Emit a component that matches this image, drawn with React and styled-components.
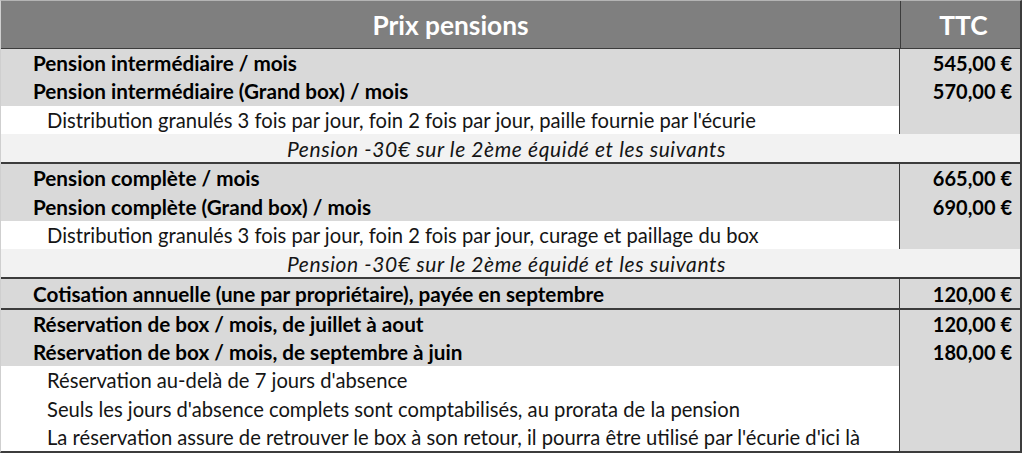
import React from 'react'
import styled, { createGlobalStyle } from 'styled-components'

const Global = createGlobalStyle`
    body {
        margin: 0;
        background: #ffffff;
        font-family: Lato, "Open Sans", sans-serif;
        color: #111111;
    }
`

const Table = styled.div`
    width: 1022px;
    border-top: 1px solid #b4b4b4;
    border-left: 1px solid #cfcfcf;
    border-right: 2px solid #3c3c3c;
    border-bottom: 2px solid #3c3c3c;
    box-sizing: border-box;
`

const Header = styled.div`
    display: flex;
    height: 47px;
    background: #7f7f7f;
    border-bottom: 1px solid #3c3c3c;
`

const HeadCell = styled.div`
    display: flex;
    align-items: center;
    justify-content: center;
    color: #ffffff;
    font-weight: 700;
    font-size: 26.3px;
    width: ${p => (p.wide ? '899px' : 'auto')};
    flex: ${p => (p.wide ? 'none' : '1')};
    border-right: ${p => (p.wide ? '1px solid #3c3c3c' : 'none')};
    padding-left: ${p => (p.wide ? '0' : '6px')};
`

const Group = styled.div`
    border-top: ${p => (p.first ? 'none' : '2px solid #3c3c3c')};
`

const Row = styled.div`
    display: flex;
    height: 28.3px;
`

const Label = styled.div`
    width: 899px;
    flex: none;
    display: flex;
    align-items: center;
    box-sizing: border-box;
    border-right: 1px solid #3c3c3c;
    background: ${p => (p.detail ? '#ffffff' : '#d9d9d9')};
    padding-left: ${p => (p.detail ? '46px' : '32px')};
    font-size: ${p => (p.detail ? '20.2px' : '20.7px')};
    font-weight: ${p => (p.detail ? 400 : 700)};
    color: ${p => (p.detail ? '#151515' : '#000000')};
    white-space: nowrap;
`

const Price = styled.div`
    flex: 1;
    display: flex;
    align-items: center;
    justify-content: flex-end;
    padding-right: 8px;
    background: #d9d9d9;
    font-size: 20px;
    font-weight: 700;
    color: #000000;
`

const Note = styled.div`
    height: 28.3px;
    display: flex;
    align-items: center;
    justify-content: center;
    background: #f2f2f2;
    font-style: italic;
    font-size: 21px;
    letter-spacing: 0.6px;
    color: #151515;
    padding-right: 8px;
`

const groups = [
    {
        rows: [
            ['Pension intermédiaire / mois', '545,00 €'],
            ['Pension intermédiaire (Grand box) / mois', '570,00 €'],
        ],
        details: ["Distribution granulés 3 fois par jour, foin 2 fois par jour, paille fournie par l'écurie"],
        note: 'Pension -30€ sur le 2ème équidé et les suivants',
    },
    {
        rows: [
            ['Pension complète / mois', '665,00 €'],
            ['Pension complète (Grand box) / mois', '690,00 €'],
        ],
        details: ['Distribution granulés 3 fois par jour, foin 2 fois par jour, curage et paillage du box'],
        note: 'Pension -30€ sur le 2ème équidé et les suivants',
    },
    {
        rows: [['Cotisation annuelle (une par propriétaire), payée en septembre', '120,00 €']],
        details: [],
    },
    {
        rows: [
            ['Réservation de box / mois, de juillet à aout', '120,00 €'],
            ['Réservation de box / mois, de septembre à juin', '180,00 €'],
        ],
        details: [
            "Réservation au-delà de 7 jours d'absence",
            "Seuls les jours d'absence complets sont comptabilisés, au prorata de la pension",
            "La réservation assure de retrouver le box à son retour, il pourra être utilisé par l'écurie d'ici là",
        ],
    },
]

export default function App() {
    return (
        <>
            <Global />
            <Table>
                <Header>
                    <HeadCell wide>Prix pensions</HeadCell>
                    <HeadCell>TTC</HeadCell>
                </Header>
                {groups.map((g, i) => (
                    <Group key={i} first={i === 0}>
                        {g.rows.map(([label, price]) => (
                            <Row key={label}>
                                <Label>{label}</Label>
                                <Price>{price}</Price>
                            </Row>
                        ))}
                        {g.details.map(d => (
                            <Row key={d}>
                                <Label detail>{d}</Label>
                                <Price />
                            </Row>
                        ))}
                        {g.note && <Note>{g.note}</Note>}
                    </Group>
                ))}
            </Table>
        </>
    )
}
